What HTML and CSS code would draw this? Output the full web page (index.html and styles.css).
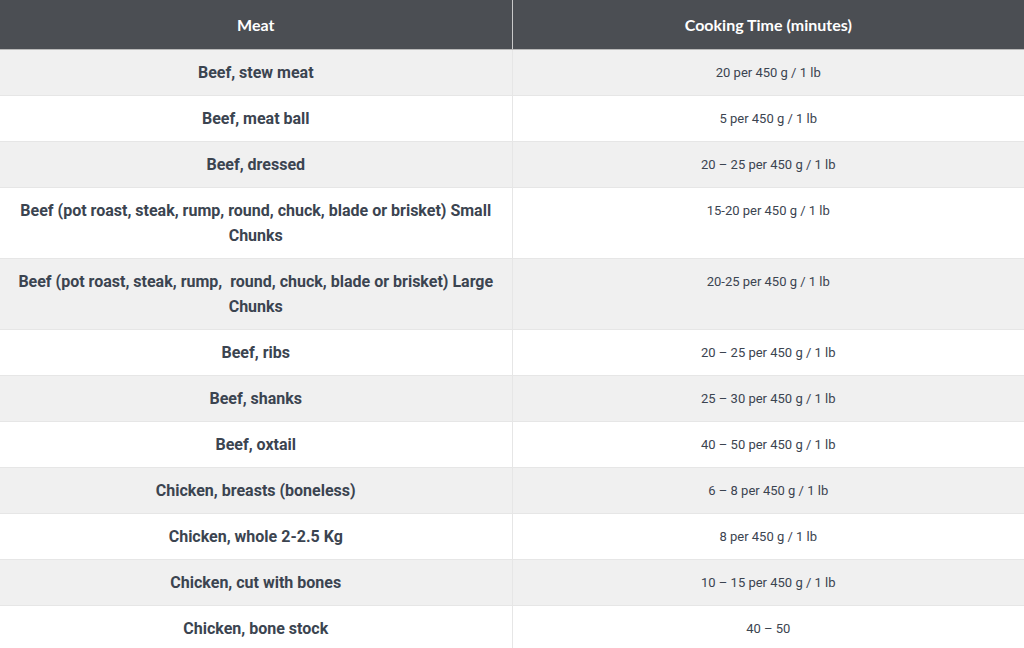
FILE: index.html
```html
<!DOCTYPE html>
<html>
<head>
<meta charset="utf-8">
<link rel="stylesheet" href="styles.css">
</head>
<body>
<table class="cook-table">
  <thead>
    <tr>
      <th>Meat</th>
      <th>Cooking Time (minutes)</th>
    </tr>
  </thead>
  <tbody>
    <tr><td class="meat">Beef, stew meat</td><td class="time">20 per 450 g / 1 lb</td></tr>
    <tr><td class="meat">Beef, meat ball</td><td class="time">5 per 450 g / 1 lb</td></tr>
    <tr><td class="meat">Beef, dressed</td><td class="time">20 – 25 per 450 g / 1 lb</td></tr>
    <tr><td class="meat">Beef (pot roast, steak, rump, round, chuck, blade or brisket) Small Chunks</td><td class="time">15-20 per 450 g / 1 lb</td></tr>
    <tr><td class="meat">Beef (pot roast, steak, rump,&nbsp; round, chuck, blade or brisket) Large Chunks</td><td class="time">20-25 per 450 g / 1 lb</td></tr>
    <tr><td class="meat">Beef, ribs</td><td class="time">20 – 25 per 450 g / 1 lb</td></tr>
    <tr><td class="meat">Beef, shanks</td><td class="time">25 – 30 per 450 g / 1 lb</td></tr>
    <tr><td class="meat">Beef, oxtail</td><td class="time">40 – 50 per 450 g / 1 lb</td></tr>
    <tr><td class="meat">Chicken, breasts (boneless)</td><td class="time">6 – 8 per 450 g / 1 lb</td></tr>
    <tr><td class="meat">Chicken, whole 2-2.5 Kg</td><td class="time">8 per 450 g / 1 lb</td></tr>
    <tr><td class="meat">Chicken, cut with bones</td><td class="time">10 – 15 per 450 g / 1 lb</td></tr>
    <tr><td class="meat">Chicken, bone stock</td><td class="time">40 – 50</td></tr>
  </tbody>
</table>
</body>
</html>
```
FILE: styles.css
```css
html, body {
  margin: 0;
  padding: 0;
  background: #ffffff;
}

.cook-table {
  width: 100%;
  border-collapse: collapse;
  table-layout: fixed;
  font-family: Roboto, "Liberation Sans", sans-serif;
  color: #3b4450;
}

.cook-table th {
  background: #4b4e53;
  color: #ffffff;
  font-family: Lato, "Liberation Sans", sans-serif;
  font-weight: 700;
  font-size: 16px;
  height: 49px;
  padding: 0 15px;
  text-align: center;
  vertical-align: middle;
  border-bottom: 1px solid #b9b9b9;
  box-sizing: border-box;
}

.cook-table th:first-child {
  border-right: 1px solid #c9c9c9;
}

.cook-table td {
  padding: 10px 15px;
  line-height: 25px;
  text-align: center;
  vertical-align: top;
  border-bottom: 1px solid #e6e6e6;
}

.cook-table td:first-child {
  border-right: 1px solid #e6e6e6;
}

.cook-table tbody tr:nth-child(odd) td {
  background: #f0f0f0;
}

.cook-table .meat {
  font-weight: 700;
  font-size: 16px;
}

.cook-table .time {
  font-size: 13px;
  font-weight: 400;
}
```
